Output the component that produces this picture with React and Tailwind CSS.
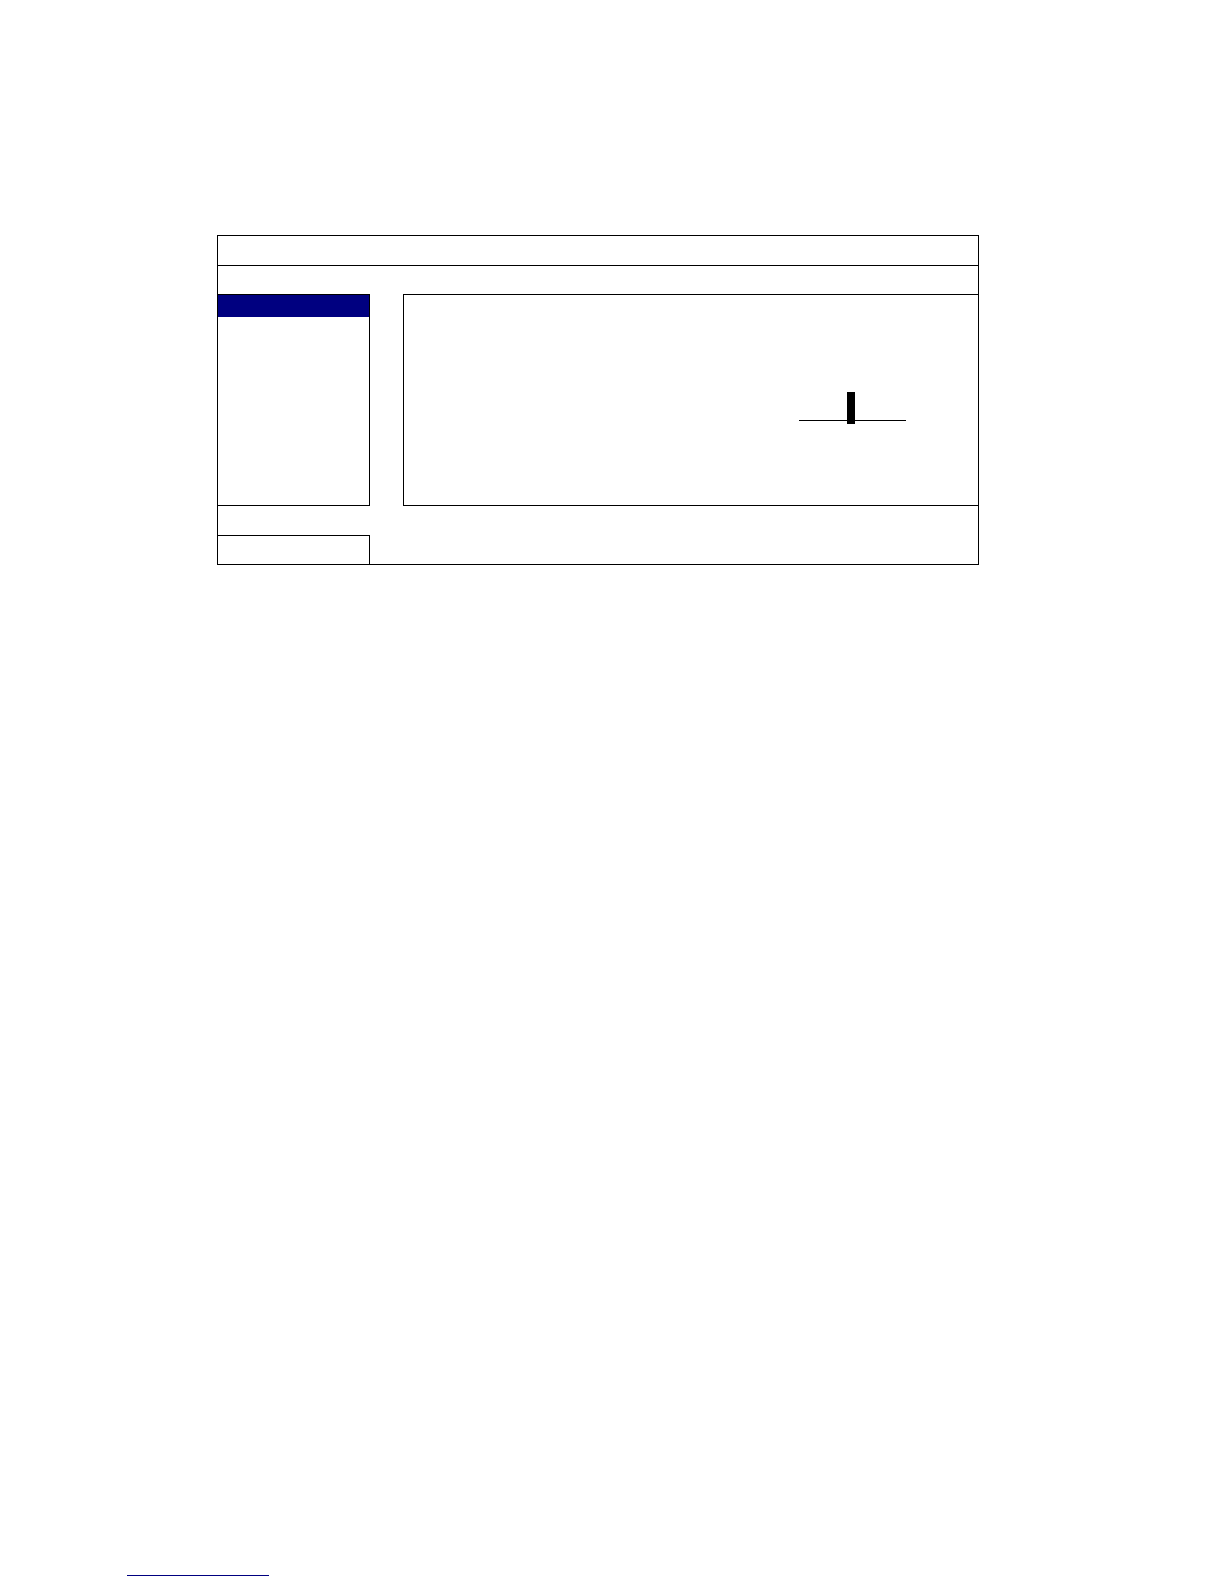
import React, { useState } from 'react';

export default function App() {
    const [level, setLevel] = useState(48);

    return (
        <div className="flex flex-col min-h-screen bg-white font-['Liberation_Sans',sans-serif]">

            {/* Settings window */}
            <main className="mt-[235px] ml-[217px] mr-[245px] border border-black">
                <header className="h-[30px] border-b border-black"></header>

                <div className="flex h-[212px] mt-7">
                    <nav aria-label="Sections" className="w-[152px] shrink-0 border-y border-r border-black">
                        <button type="button" aria-label="Selected section" className="block w-full h-[22px] bg-[#000080]"></button>
                    </nav>

                    <section className="flex flex-1 justify-end items-start ml-[33px] pt-[97px] pr-[72px] border-y border-l border-black">
                        <input
                            type="range"
                            aria-label="Level"
                            min="0"
                            max="99"
                            value={level}
                            onChange={(e) => setLevel(Number(e.target.value))}
                            className="block w-[107px] h-8 appearance-none bg-[linear-gradient(black,black)] bg-[length:100%_1px] bg-[position:0_28px] bg-no-repeat [&::-webkit-slider-thumb]:appearance-none [&::-webkit-slider-thumb]:w-2 [&::-webkit-slider-thumb]:h-8 [&::-webkit-slider-thumb]:bg-black"
                        />
                    </section>
                </div>

                <div className="flex h-[58px] pt-[29px]">
                    <div className="w-[152px] border-t border-r border-black"></div>
                </div>
            </main>

            <footer className="mt-auto pb-2 pl-[127px]">
                <a href="#!" aria-label="Website" className="block w-[142px] h-5 border-b border-[#000080]"></a>
            </footer>
        </div>
    );
}
